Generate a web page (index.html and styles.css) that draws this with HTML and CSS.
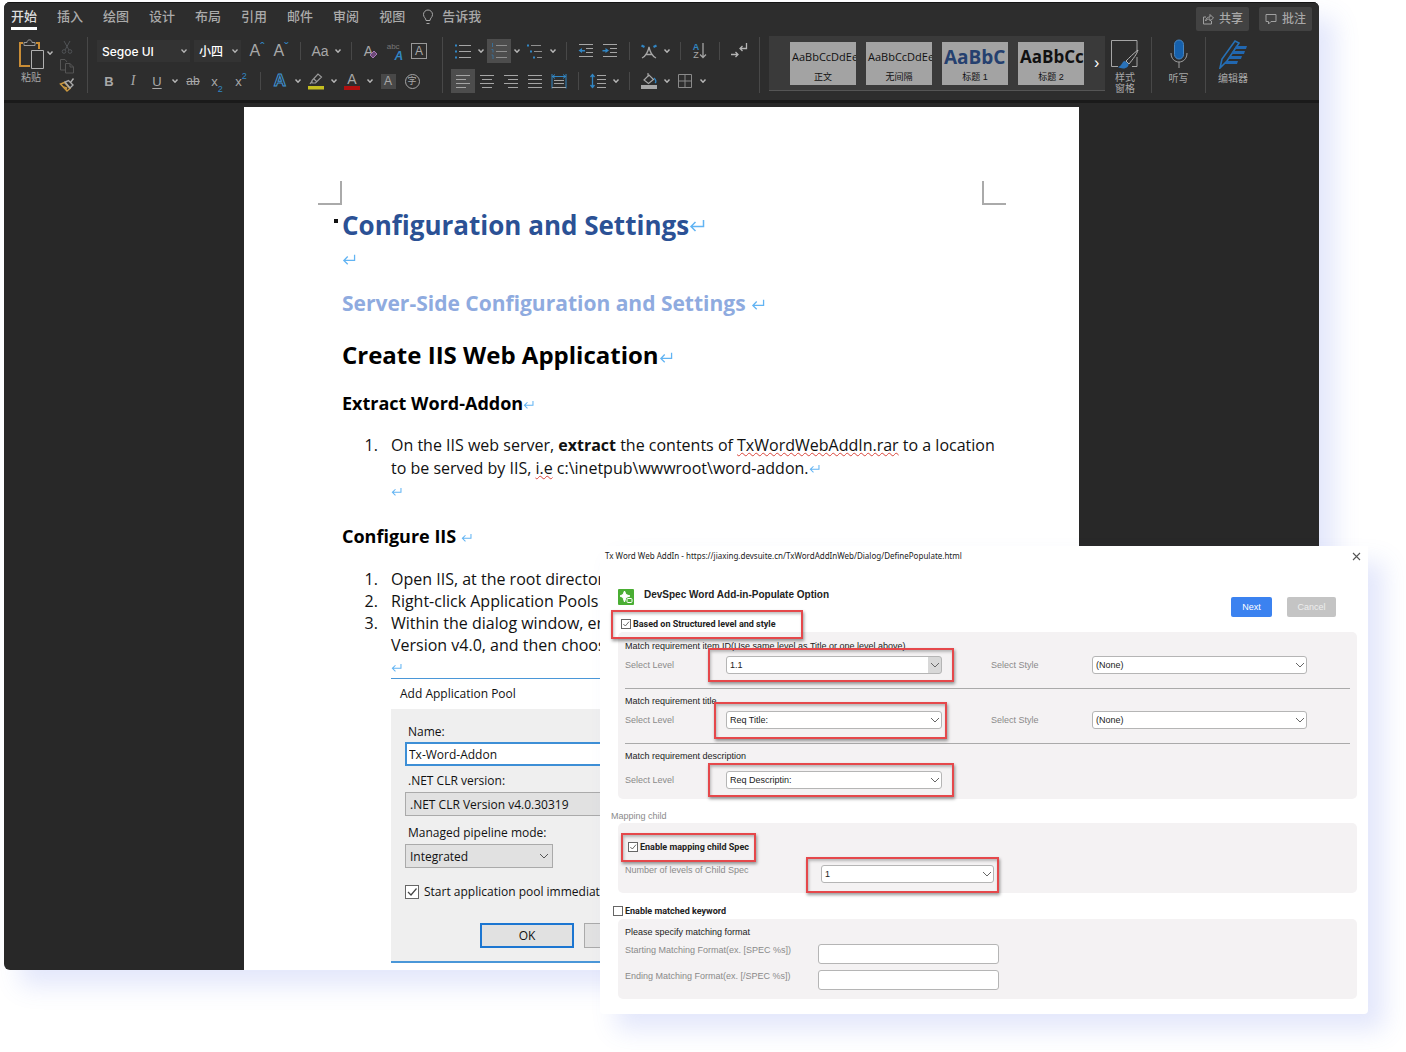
FILE: index.html
```html
<!DOCTYPE html>
<html lang="en">
<head>
    <meta charset="UTF-8">
    <meta name="viewport" content="width=device-width, initial-scale=1.0">
    <title>DevSpec Word Add-in</title>
    <link rel="stylesheet" href="styles.css">
</head>
<body>

    <!-- shared shapes -->
    <svg class="defs" width="0" height="0" aria-hidden="true">
        <symbol id="chev" viewBox="0 0 8 8"><path d="M1.5 2.5L4 5.2L6.5 2.5" fill="none" stroke="#b5b5b5" stroke-width="1.5"/></symbol>
        <symbol id="ret" viewBox="0 0 16 14"><path d="M14.5 1V7.5H2M6.5 3L2 7.5L6.5 12" fill="none" stroke="#62b4f3" stroke-width="1.5"/></symbol>
    </svg>

    <main class="word">
        <header class="ribbon">
            <div class="tabs-row">
                <nav class="tabs">
                    <a href="#" class="tab active">开始</a>
                    <a href="#" class="tab">插入</a>
                    <a href="#" class="tab">绘图</a>
                    <a href="#" class="tab">设计</a>
                    <a href="#" class="tab">布局</a>
                    <a href="#" class="tab">引用</a>
                    <a href="#" class="tab">邮件</a>
                    <a href="#" class="tab">审阅</a>
                    <a href="#" class="tab">视图</a>
                </nav>
                <button class="tell-me">
                    <svg width="12" height="16" viewBox="0 0 12 16" fill="none" stroke="#a8a8a8"><path d="M4 11.5C4 9 1.5 8.5 1.5 5.5a4.5 4.5 0 0 1 9 0C10.500 8.500 8 9 8 11.500zM4.500 14.500h3"/></svg>
                    告诉我
                </button>
                <div class="share">
                    <button class="share-btn">
                        <svg width="12" height="12" viewBox="0 0 12 12" fill="none" stroke="#a0a0a0"><path d="M4 4H1.500v7h8V8M3.500 8C4 5 6 4 8 4V1.500L11.500 5L8 8V6C6 6 4.500 6.500 3.500 8z"/></svg>
                        共享
                    </button>
                    <button class="share-btn">
                        <svg width="12" height="12" viewBox="0 0 12 12" fill="none" stroke="#a0a0a0"><path d="M1 1.500h10v7H6L3.500 11V8.500H1z"/></svg>
                        批注
                    </button>
                </div>
            </div>

            <div class="tools">
                <div class="group clipboard">
                    <button class="big paste">
                        <svg width="27" height="31" viewBox="0 0 27 31" fill="none"><path d="M5 4H2V27H12M18 4H21V10" stroke="#c98d36" stroke-width="2"/><path d="M6 6.500V3.500H9C9 0 14 0 14 3.500H17V6.500z" stroke="#999"/><path d="M13.500 11.500H25.500V29.500H13.500z" fill="#2d2d2d" stroke="#b0b0b0"/></svg>
                        <span>粘贴</span>
                    </button>
                    <svg class="chev" aria-hidden="true"><use href="#chev"/></svg>
                    <div class="clip-side">
                        <button aria-label="Cut"><svg width="16" height="16" viewBox="0 0 16 16" fill="none" stroke="#505356"><path d="M5 2L10 11M11 2L6 11"/><circle cx="5" cy="12.500" r="1.800"/><circle cx="11" cy="12.500" r="1.800"/></svg></button>
                        <button aria-label="Copy"><svg width="16" height="16" viewBox="0 0 16 16" fill="none" stroke="#555"><path d="M6 12H1.500V1.500H6L8 4M6.500 5.500H11L14.500 9V15H6.500zM11 5.500V9H14.500"/></svg></button>
                        <button aria-label="Format painter"><svg width="16" height="16" viewBox="0 0 16 16" fill="none"><path d="M1.500 7L8 14L11 11.500L5.500 5.500z" stroke="#c9973f" stroke-width="1.500"/><path d="M4 9L8.500 10.500L7.500 13z" fill="#c9973f"/><path d="M6 5L11 11L14 8L9.500 3.500zM11.500 5.500L14.500 1.500" stroke="#aaa" stroke-width="1.400"/></svg></button>
                    </div>
                </div>

                <div class="group font">
                    <div class="row">
                        <select class="font-name" aria-label="Font"><option>Segoe UI</option></select>
                        <select class="font-size" aria-label="Font size"><option>小四</option></select>
                        <button class="icon resize">A<sup>ˆ</sup></button>
                        <button class="icon resize">A<sup>ˇ</sup></button>
                        <i class="sep"></i>
                        <button class="icon">Aa</button>
                        <svg class="chev"><use href="#chev"/></svg>
                        <i class="sep"></i>
                        <button class="icon clear">A<svg width="9" height="9" viewBox="0 0 9 9"><path d="M1 5L5 1L8 4L4 8z" fill="#6d4a78" stroke="#a678b4"/></svg></button>
                        <button class="icon phonetic"><small>abc</small><b>A</b></button>
                        <button class="icon"><span class="boxed">A</span></button>
                    </div>
                    <div class="row">
                        <button class="icon strong">B</button>
                        <button class="icon italic">I</button>
                        <button class="icon under">U</button>
                        <svg class="chev"><use href="#chev"/></svg>
                        <button class="icon strike">ab</button>
                        <button class="icon script">x<sub>2</sub></button>
                        <button class="icon script">x<sup>2</sup></button>
                        <i class="sep"></i>
                        <button class="icon effect">A</button>
                        <svg class="chev"><use href="#chev"/></svg>
                        <button class="icon" aria-label="Highlight"><svg width="18" height="18" viewBox="0 0 18 18" fill="none"><path d="M5 11V8.500L11 2L14.500 5L8.500 11zM7 7L10 10M3 12L5 9" stroke="#999" stroke-width="1.200"/><path d="M1 14H17V17.500H1z" fill="#c5bf20"/></svg></button>
                        <svg class="chev"><use href="#chev"/></svg>
                        <button class="icon colour">A</button>
                        <svg class="chev"><use href="#chev"/></svg>
                        <button class="icon"><span class="shaded">A</span></button>
                        <button class="icon"><span class="circled">字</span></button>
                    </div>
                </div>

                <div class="group para">
                    <div class="row">
                        <button class="icon" aria-label="Bullets"><svg width="18" height="18" viewBox="0 0 18 18"><path d="M5 3.500H17M5 9.500H17M5 15.500H17" stroke="#a5a5a5"/><path d="M1 2.500h2v2H1zM1 8.500h2v2H1zM1 14.500h2v2H1z" fill="#3186c4"/></svg></button>
                        <svg class="chev"><use href="#chev"/></svg>
                        <button class="icon on" aria-label="Numbering"><svg width="18" height="18" viewBox="0 0 18 18"><path d="M6 3.500H17M6 9.500H17M6 15.500H17" stroke="#8e8e8e"/><path d="M2.500 1V5M1.500 7.500H3V10.500M1.500 13H3V17" stroke="#3a6e96" fill="none"/></svg></button>
                        <svg class="chev"><use href="#chev"/></svg>
                        <button class="icon" aria-label="Multilevel list"><svg width="18" height="18" viewBox="0 0 18 18"><path d="M5 3.500H15M8 9.500H16M11 15.500H16" stroke="#909090"/><path d="M1 2.500h2v2H1zM4 8.500h2v2H4zM7 14.500h2v2H7z" fill="#3186c4"/></svg></button>
                        <svg class="chev"><use href="#chev"/></svg>
                        <i class="sep"></i>
                        <button class="icon" aria-label="Decrease indent"><svg width="18" height="18" viewBox="0 0 18 18"><path d="M2 2.500H16M9 6.500H16M9 10.500H16M2 14.500H16" stroke="#a5a5a5"/><path d="M1.500 8.500L5 6V8H8V9.500H5V11z" fill="#3186c4"/></svg></button>
                        <button class="icon" aria-label="Increase indent"><svg width="18" height="18" viewBox="0 0 18 18"><path d="M2 2.500H16M9 6.500H16M9 10.500H16M2 14.500H16" stroke="#a5a5a5"/><path d="M8 8.500L4.500 6V8H1.500V9.500H4.500V11z" fill="#3186c4"/></svg></button>
                        <i class="sep"></i>
                        <button class="icon" aria-label="Asian layout"><svg width="18" height="18" viewBox="0 0 18 18" fill="none"><path d="M1.500 3.500L4.500 5M16.500 3.500L13.500 5" stroke="#3186c4" stroke-width="2.200"/><path d="M2 16C6 14 8 10 9 5C10 10 12 14 16 16M5.500 12.500H12.500" stroke="#a5a5a5" stroke-width="1.300"/></svg></button>
                        <svg class="chev"><use href="#chev"/></svg>
                        <i class="sep"></i>
                        <button class="icon sort" aria-label="Sort"><span><b>A</b>Z</span><svg width="8" height="18" viewBox="0 0 8 18"><path d="M4 1V15.500M1 12.500L4 15.500L7 12.500" fill="none" stroke="#a5a5a5" stroke-width="1.300"/></svg></button>
                        <i class="sep"></i>
                        <button class="icon" aria-label="Show marks"><svg width="18" height="18" viewBox="0 0 18 18" fill="none" stroke="#b5b5b5" stroke-width="1.300"><path d="M16.500 1V6.500H10M12.500 4L10 6.500L12.500 9M1 12.500H8M5.500 10L8 12.500L5.500 15"/></svg></button>
                    </div>
                    <div class="row">
                        <button class="icon on" aria-label="Align left"><svg width="16" height="16" viewBox="0 0 16 16" stroke="#a5a5a5"><path d="M1 2.500H15M1 6.500H11M1 10.500H15M1 14.500H11"/></svg></button>
                        <button class="icon" aria-label="Centre"><svg width="16" height="16" viewBox="0 0 16 16" stroke="#a5a5a5"><path d="M1 2.500H15M3 6.500H13M1 10.500H15M3 14.500H13"/></svg></button>
                        <button class="icon" aria-label="Align right"><svg width="16" height="16" viewBox="0 0 16 16" stroke="#a5a5a5"><path d="M1 2.500H15M5 6.500H15M1 10.500H15M5 14.500H15"/></svg></button>
                        <button class="icon" aria-label="Justify"><svg width="16" height="16" viewBox="0 0 16 16" stroke="#a5a5a5"><path d="M1 2.500H15M1 6.500H15M1 10.500H15M1 14.500H15"/></svg></button>
                        <button class="icon" aria-label="Distribute"><svg width="16" height="16" viewBox="0 0 16 16" fill="none"><path d="M1 1V15.500M15 1V15.500M1 3.500H15M4 1.500L1.500 3.500L4 5.500M12 1.500L14.500 3.500L12 5.500" stroke="#3186c4"/><path d="M3 7.500H13M3 10.500H13M1 14.500H15" stroke="#a5a5a5"/></svg></button>
                        <i class="sep"></i>
                        <button class="icon" aria-label="Line spacing"><svg width="18" height="18" viewBox="0 0 18 18" fill="none"><path d="M3.500 2V16M1.500 5L3.500 2.500L5.500 5M1.500 13L3.500 15.500L5.500 13" stroke="#3186c4" stroke-width="1.300"/><path d="M8 3.500H17M8 7.500H17M8 11.500H17M8 15.500H17" stroke="#a5a5a5"/></svg></button>
                        <svg class="chev"><use href="#chev"/></svg>
                        <i class="sep"></i>
                        <button class="icon" aria-label="Shading"><svg width="18" height="18" viewBox="0 0 18 18" fill="none"><path d="M4 8L9 3L13.500 7.500L8.500 11.500zM8 1V5" stroke="#a5a5a5" stroke-width="1.200"/><path d="M14 6C16 8 16.500 10 15 11" stroke="#3186c4" stroke-width="1.400"/><path d="M1 13H17V17H1z" fill="#a8a8a8"/></svg></button>
                        <svg class="chev"><use href="#chev"/></svg>
                        <button class="icon" aria-label="Borders"><svg width="16" height="16" viewBox="0 0 16 16" fill="none" stroke="#8a8a8a"><path d="M1.500 1.500H14.500V14.500H1.500zM8 1.500V14.500M1.500 8H14.500"/></svg></button>
                        <svg class="chev"><use href="#chev"/></svg>
                    </div>
                </div>

                <div class="gallery">
                    <button class="style-card"><span class="sample">AaBbCcDdEe</span><span class="style-name">正文</span></button>
                    <button class="style-card"><span class="sample">AaBbCcDdEe</span><span class="style-name">无间隔</span></button>
                    <button class="style-card"><span class="sample large blue">AaBbC</span><span class="style-name">标题 1</span></button>
                    <button class="style-card"><span class="sample medium">AaBbCc</span><span class="style-name">标题 2</span></button>
                    <button class="more" aria-label="More styles">›</button>
                </div>

                <div class="group end">
                    <button class="big pane">
                        <svg width="30" height="30" viewBox="0 0 30 30" fill="none"><path d="M27 12V1.500H1.500V27.500H8M22 27.500H27V18" stroke="#a5a5a5"/><path d="M28 11C24 14 19 19 16 22L19 25C23 20 27 15 28 11z" stroke="#b5b5b5"/><path d="M15 22C12 22 12 27 8 28C13 31 19 29 18.500 25z" fill="#2a72b8"/></svg>
                        <span>样式<br>窗格</span>
                    </button>
                </div>
                <div class="group end">
                    <button class="big">
                        <svg width="20" height="30" viewBox="0 0 20 30" fill="none"><rect x="5.500" y="1" width="9" height="19" rx="4.500" fill="#1661ad" stroke="#4a86bf"/><path d="M2 14C2 26 18 26 18 14M10 23V29" stroke="#a0a0a0"/></svg>
                        <span>听写</span>
                    </button>
                </div>
                <div class="group end">
                    <button class="big">
                        <svg width="30" height="30" viewBox="0 0 30 30" fill="none"><path d="M2 29L4 20L17 2L21 4L9 22z" stroke="#2670b5" stroke-width="1.600"/><path d="M18 7H29L28 10H16zM15 12H27L26 15H13zM12 17H24L23 20H10zM9 22H20L19 25H6z" fill="#2167b0"/></svg>
                        <span>编辑器</span>
                    </button>
                </div>
            </div>
        </header>

        <article class="page">
            <div class="crop-marks"><i class="crop left"></i><i class="crop right"></i></div>
            <h1>Configuration and Settings<svg class="ret big-ret"><use href="#ret"/></svg></h1>
            <p class="blank"><svg class="ret"><use href="#ret"/></svg></p>
            <h2>Server-Side Configuration and Settings <svg class="ret"><use href="#ret"/></svg></h2>
            <h3>Create IIS Web Application<svg class="ret"><use href="#ret"/></svg></h3>
            <h4>Extract Word-Addon<svg class="ret small-ret"><use href="#ret"/></svg></h4>
            <ol>
                <li>On the IIS web server, <b>extract</b> the contents of <span class="typo">TxWordWebAddIn.rar</span> to a location<br>
                    to be served by IIS, <span class="typo">i.e</span> c:\inetpub\wwwroot\word-addon.<svg class="ret small-ret"><use href="#ret"/></svg><br>
                    <svg class="ret small-ret"><use href="#ret"/></svg></li>
            </ol>
            <h4>Configure IIS <svg class="ret small-ret"><use href="#ret"/></svg></h4>
            <ol class="tight">
                <li>Open IIS, at the root directory</li>
                <li>Right-click Application Pools</li>
                <li>Within the dialog window, enter<br>
                    Version v4.0, and then choose<br>
                    <svg class="ret small-ret"><use href="#ret"/></svg></li>
            </ol>

            <form class="pool">
                <div class="pool-title">Add Application Pool</div>
                <div class="pool-body">
                    <label for="pool-name">Name:</label>
                    <input type="text" id="pool-name" value="Tx-Word-Addon">
                    <label for="clr">.NET CLR version:</label>
                    <select id="clr"><option>.NET CLR Version v4.0.30319</option></select>
                    <label for="pipeline">Managed pipeline mode:</label>
                    <select id="pipeline" class="short"><option>Integrated</option></select>
                    <label class="pool-check"><input type="checkbox" checked>Start application pool immediately</label>
                    <div class="pool-actions">
                        <button type="button" class="ok">OK</button>
                        <button type="button" aria-label="Cancel"></button>
                    </div>
                </div>
            </form>
        </article>
    </main>

    <section class="addin">
        <div class="addin-bar">
            <span>Tx Word Web AddIn - https://jiaxing.devsuite.cn/TxWordAddInWeb/Dialog/DefinePopulate.html</span>
            <button class="close" aria-label="Close"><svg width="9" height="9" viewBox="0 0 9 9"><path d="M1 1L8 8M8 1L1 8" stroke="#555" stroke-width="1.100"/></svg></button>
        </div>

        <div class="addin-head">
            <svg width="16" height="16" viewBox="0 0 16 16"><rect width="16" height="16" rx="1" fill="#4aae33"/><path d="M6.500 2L8 5.500L12 7L8 8.500L6.500 13L5 8.500L2 7L5 5.500z" fill="#fff" stroke="#fff"/><rect x="9" y="9.500" width="5" height="4" rx="1" fill="#4aae33" stroke="#fff"/></svg>
            <h5>DevSpec Word Add-in-Populate Option</h5>
            <div class="addin-actions">
                <button class="next">Next</button>
                <button class="cancel">Cancel</button>
            </div>
        </div>

        <label class="check marked first-check"><input type="checkbox" checked>Based on Structured level and style</label>
        <div class="panel">
            <div class="match">
                <p>Match requirement item ID(Use same level as Title or one level above)</p>
                <div class="fields">
                    <label for="level-id">Select Level</label>
                    <div class="pick marked wide"><select id="level-id" class="hover"><option>1.1</option></select></div>
                    <label for="style-id">Select Style</label>
                    <select id="style-id"><option>(None)</option></select>
                </div>
            </div>
            <div class="match">
                <p>Match requirement title</p>
                <div class="fields">
                    <label for="level-title">Select Level</label>
                    <div class="pick marked"><select id="level-title"><option>Req Title:</option></select></div>
                    <label for="style-title">Select Style</label>
                    <select id="style-title"><option>(None)</option></select>
                </div>
            </div>
            <div class="match">
                <p>Match requirement description</p>
                <div class="fields last">
                    <label for="level-desc">Select Level</label>
                    <div class="pick marked wide"><select id="level-desc"><option>Req Descriptin:</option></select></div>
                </div>
            </div>
        </div>

        <p class="caption">Mapping child</p>
        <div class="panel child">
            <label class="check marked"><input type="checkbox" checked>Enable mapping child Spec</label>
            <div class="child-row">
                <label for="levels">Number of levels of Child Spec</label>
                <div class="pick marked wide"><select id="levels"><option>1</option></select></div>
            </div>
        </div>

        <label class="check keyword"><input type="checkbox">Enable matched keyword</label>
        <div class="panel format">
            <p>Please specify matching format</p>
            <div class="format-row">
                <label for="start">Starting Matching Format(ex. [SPEC %s])</label>
                <input type="text" id="start">
            </div>
            <div class="format-row">
                <label for="end">Ending Matching Format(ex. [/SPEC %s])</label>
                <input type="text" id="end">
            </div>
        </div>
    </section>

</body>
</html>
```
FILE: styles.css
```css
* {
    box-sizing: border-box;
}
body {
    position: relative;
    margin: 0;
    padding: 2px 87px 80px 4px;
    background-color: #fff;
    font-family: "Open Sans", "Noto Sans", sans-serif;
}
h1, h2, h3, h4, h5, p, ol {
    margin: 0;
    padding: 0;
}
button {
    padding: 0;
    border: none;
    background: none;
    color: inherit;
    font: inherit;
    cursor: pointer;
}
.defs {
    display: block;
    position: absolute;
}

/* Word window */
.word {
    border-radius: 6px;
    background-color: #282828;
    box-shadow: 16px 16px 24px rgba(90, 115, 230, 0.17);
    overflow: hidden;
}
.ribbon {
    height: 101px;
    border-top: 1px solid #151515;
    border-bottom: 3px solid #1a1a1a;
    background-color: #2d2d2d;
    color: #a8a8a8;
    font-family: "Liberation Sans", "Noto Sans CJK SC", sans-serif;
}
.tabs-row {
    display: flex;
    height: 34px;
    padding: 4px 7px 0;
    font-size: 13px;
    line-height: 20px;
}
.tabs {
    display: flex;
    gap: 20px;
}
.tab {
    height: 23px;
    color: #aaa;
    font-weight: 500;
    text-decoration: none;
}
.tab.active {
    border-bottom: 3px solid #fff;
    color: #ddd;
}
.tell-me {
    display: flex;
    align-items: center;
    gap: 8px;
    height: 20px;
    margin-left: 17px;
    font-weight: 500;
}
.share {
    display: flex;
    gap: 10px;
    margin-left: auto;
}
.share-btn {
    display: flex;
    align-items: center;
    justify-content: center;
    gap: 5px;
    width: 53px;
    height: 24px;
    border-radius: 2px;
    background-color: #424242;
    font-size: 12px;
    font-weight: 500;
}
.tools {
    display: flex;
    height: 56px;
}
.group {
    border-right: 1px solid #484848;
}
.clipboard {
    display: flex;
    width: 84px;
    padding: 2px 0 0 12px;
}
.big {
    display: flex;
    flex-direction: column;
    align-items: center;
    gap: 2px;
    font-size: 10px;
    line-height: 12px;
}
.chev {
    flex: none;
    width: 12px;
    height: 8px;
}
.clipboard .chev {
    margin: 10px 1px 0 -4px;
}
.paste {
    width: 32px;
    padding-right: 2px;
}
.clip-side {
    display: flex;
    flex-direction: column;
    gap: 3px;
    margin-left: 2px;
}
.clip-side button {
    height: 16px;
}
.clip-side svg {
    display: block;
}
.font {
    width: 355px;
    padding: 2px 0 0 9px;
}
.para {
    width: 317px;
    padding: 2px 0 0 8px;
}
.row {
    display: flex;
    align-items: center;
    height: 24px;
    margin-bottom: 6px;
}
.icon {
    display: flex;
    flex: none;
    align-items: center;
    justify-content: center;
    width: 24px;
    height: 24px;
    font-size: 14px;
}
.icon.on {
    background-color: #4d4d4d;
}
.icon sup, .icon sub {
    color: #3186c4;
    font-size: 9px;
    line-height: 8px;
}
.sep {
    flex: none;
    width: 1px;
    height: 18px;
    margin: 0 7px;
    background-color: #484848;
}
.font-name, .font-size {
    appearance: none;
    height: 22px;
    margin-right: 4px;
    padding: 0 5px;
    border: none;
    border-radius: 0;
    background: #333 url("data:image/svg+xml,%3Csvg xmlns='http://www.w3.org/2000/svg' width='8' height='8'%3E%3Cpath d='M1.500 2.500L4 5.200L6.500 2.500' fill='none' stroke='%23b5b5b5' stroke-width='1.300'/%3E%3C/svg%3E") no-repeat right 2px center;
    color: #fff;
    font: 500 12px Inter, "Noto Sans CJK SC", sans-serif;
}
.font-name {
    width: 93px;
}
.font-size {
    width: 47px;
}
.resize {
    font-size: 16px;
}
.icon.resize sup {
    align-self: flex-start;
    padding-top: 5px;
    font-size: 13px;
}
.clear svg {
    align-self: flex-end;
    margin: 0 0 4px -4px;
}
.phonetic {
    color: #777;
}
.phonetic small {
    align-self: flex-start;
    font-size: 8px;
    line-height: 16px;
}
.phonetic b {
    align-self: flex-end;
    margin-left: -5px;
    color: #3186c4;
    font-size: 12px;
    font-style: italic;
}
.boxed {
    width: 16px;
    border: 1px solid #999;
    font-size: 12px;
    line-height: 14px;
}
.strong {
    font-size: 13px;
    font-weight: bold;
}
.italic {
    font-family: "Liberation Serif", serif;
    font-style: italic;
}
.under {
    font-size: 13px;
    text-decoration: underline;
    text-underline-offset: 2px;
}
.strike {
    font-size: 12px;
    text-decoration: line-through;
}
.script {
    font-size: 13px;
}
.script sub {
    align-self: flex-end;
}
.script sup {
    align-self: flex-start;
    padding-top: 3px;
}
.effect {
    color: #2d2d2d;
    font-size: 17px;
    font-weight: bold;
    -webkit-text-stroke: 1px #3f93d2;
}
.colour {
    width: 16px;
    height: 17px;
    margin: 0 4px;
    border-bottom: 4px solid #b01010;
}
.shaded {
    width: 15px;
    background-color: #484848;
    font-size: 12px;
    line-height: 15px;
}
.circled {
    width: 15px;
    border: 1px solid #a5a5a5;
    border-radius: 50%;
    font-size: 9px;
    line-height: 13px;
}
.sort span {
    display: grid;
    font-size: 9px;
    line-height: 8px;
}
.sort b {
    color: #3186c4;
}
.gallery {
    display: flex;
    align-items: center;
    gap: 10px;
    margin: -1px 5px 0 9px;
    padding-left: 21px;
    width: 336px;
    height: 55px;
    border-bottom: 1px solid #555;
    background-color: #3a3a3a;
}
.style-card {
    flex: none;
    width: 66px;
    height: 43px;
    padding: 0 2px;
    background-color: #a3a3a3;
    color: #111;
    overflow: hidden;
}
.sample {
    display: block;
    height: 28px;
    font: 11px/30px "Open Sans", sans-serif;
    text-align: left;
    white-space: nowrap;
}
.sample.large {
    font-size: 19px;
    font-weight: bold;
}
.sample.medium {
    font-size: 17px;
    font-weight: bold;
}
.sample.blue {
    color: #25406f;
}
.style-name {
    display: block;
    font-size: 9px;
    line-height: 14px;
}
.more {
    color: #fff;
    font-size: 16px;
}
.end {
    width: 54px;
    padding-top: 2px;
}
.end .big {
    width: 100%;
    gap: 4px;
}
.end .big span {
    line-height: 11px;
}
.end:nth-last-child(3) {
    width: 42px;
}
.end .big.pane {
    width: 30px;
    gap: 3px;
}
.end:last-child {
    border: none;
}

/* document */
.page {
    width: 835px;
    margin: 4px auto 0;
    padding: 74px 73px 7px 98px;
    background-color: #fff;
    color: #111;
    white-space: nowrap;
}
.crop-marks {
    display: flex;
    justify-content: space-between;
    margin-left: -24px;
}
.crop {
    width: 24px;
    height: 24px;
    border-bottom: 2px solid #aaa;
}
.crop.left {
    border-right: 2px solid #aaa;
}
.crop.right {
    border-left: 2px solid #aaa;
}
h1 {
    position: relative;
    color: #2b5195;
    font-size: 26px;
    line-height: 40px;
}
h1::before {
    position: absolute;
    left: -8px;
    top: 14px;
    width: 4px;
    height: 4px;
    background-color: #111;
    content: "";
}
.ret {
    width: 14px;
    height: 12px;
}
.big-ret {
    width: 16px;
    height: 14px;
    margin-bottom: 2px;
}
.small-ret {
    width: 11px;
    height: 10px;
}
.blank {
    height: 30px;
    line-height: 30px;
}
h2 {
    margin-top: 10px;
    color: #8fabdf;
    font-size: 21px;
    line-height: 36px;
}
h3 {
    margin-top: 16px;
    color: #000;
    font-size: 24px;
    line-height: 36px;
}
h4 {
    margin-top: 16px;
    color: #000;
    font-size: 18px;
    line-height: 28px;
}
ol {
    margin: 17px 0 19px;
    padding-left: 40px;
    font-size: 16px;
    line-height: 23px;
}
li {
    padding-left: 9px;
}
ol.tight {
    margin: 18px 0 0;
    line-height: 22px;
}
.typo {
    text-decoration: underline wavy #d9443a 1px;
    text-underline-offset: 1px;
}

/* application pool form */
.pool {
    width: 400px;
    margin-left: 49px;
    border: solid #4a97d8;
    border-width: 1px 0 2px;
    font-size: 12px;
}
.pool-title {
    padding-left: 9px;
    line-height: 30px;
}
.pool-body {
    display: flex;
    flex-direction: column;
    padding: 13px 14px 13px;
    background-color: #efefef;
}
.pool-body > label {
    padding-left: 3px;
    line-height: 20px;
}
.pool input[type="text"], .pool select {
    appearance: none;
    height: 24px;
    margin-bottom: 5px;
    padding: 0 4px;
    border: 1px solid #aaa;
    border-radius: 0;
    background-color: #e1e1e1;
    color: #111;
    font: inherit;
}
.pool input[type="text"] {
    border: 2px solid #3d8fd6;
    background-color: #fff;
    padding: 0 2px;
}
.pool select {
    margin: 1px 0 7px;
}
.pool select.short {
    width: 148px;
    background: #e1e1e1 url("data:image/svg+xml,%3Csvg xmlns='http://www.w3.org/2000/svg' width='10' height='8'%3E%3Cpath d='M1 2L5 6L9 2' fill='none' stroke='%23555'/%3E%3C/svg%3E") no-repeat right 3px center;
}
.pool-body > .pool-check {
    display: flex;
    align-items: center;
    gap: 5px;
    margin-top: 7px;
    padding: 0;
}
input[type="checkbox"] {
    flex: none;
    appearance: none;
    width: 10px;
    height: 10px;
    margin: 0;
    border: 1px solid #666;
    background: #fff no-repeat center;
}
input[type="checkbox"]:checked {
    background-image: url("data:image/svg+xml,%3Csvg xmlns='http://www.w3.org/2000/svg' viewBox='0 0 12 12'%3E%3Cpath d='M2 6L5 9L10.500 2.500' fill='none' stroke='%23444' stroke-width='1.200'/%3E%3C/svg%3E");
}
.pool-check input[type="checkbox"] {
    width: 14px;
    height: 14px;
}
.pool-actions {
    display: flex;
    gap: 10px;
    margin: 21px 0 0 75px;
}
.pool-actions button {
    width: 94px;
    height: 25px;
    border: 1px solid #aaa;
    background-color: #e1e1e1;
}
.pool-actions .ok {
    border: 2px solid #1c76d1;
}

/* add-in window, floats over the document */
.addin {
    position: absolute;
    left: 600px;
    right: 38px;
    top: 546px;
    padding: 0 11px 15px;
    border-radius: 0 0 4px 4px;
    background-color: #fff;
    box-shadow: 16px 16px 24px rgba(90, 115, 230, 0.17);
    color: #222;
    font: 9px/12px "Liberation Sans", sans-serif;
}
.addin-bar {
    display: flex;
    justify-content: space-between;
    align-items: center;
    height: 20px;
    margin: 0 -4px 0 -6px;
    font: 8px/12px "Noto Sans", sans-serif;
}
.close svg {
    display: block;
}
.addin-head {
    display: flex;
    gap: 10px;
    height: 51px;
    padding: 23px 21px 0 7px;
}
.addin-head h5 {
    font-size: 10px;
    line-height: 12px;
}
.addin-actions {
    display: flex;
    gap: 15px;
    margin: 8px 0 0 auto;
}
.addin-actions button {
    width: 49px;
    height: 20px;
    border-radius: 2px;
    background-color: #c4c4c4;
    color: #eee;
}
.addin-actions .next {
    width: 41px;
    background-color: #3b82f0;
    color: #fff;
}
.check {
    display: flex;
    align-items: center;
    gap: 2px;
    width: max-content;
    height: 14px;
    font-family: Roboto, sans-serif;
    font-size: 9px;
    font-weight: bold;
}
.first-check {
    margin: 0 0 1px 10px;
}
.panel {
    margin-left: 7px;
    padding: 8px 7px 0;
    border-radius: 5px;
    background-color: #f4f2f3;
}
.panel p {
    line-height: 12px;
}
.match {
    height: 55px;
    border-bottom: 1px solid #aaa;
}
.match:first-child {
    height: 49px;
}
.match:last-child {
    border: none;
}
.match + .match p {
    padding-top: 6px;
}
.fields {
    display: grid;
    grid-template-columns: 101px 216px 49px 101px 215px;
    align-items: center;
    height: 18px;
    margin-top: 4px;
}
.fields.last {
    margin-top: 9px;
}
.fields label:nth-of-type(2) {
    grid-column: 4;
}
.fields label, .child-row label, .format-row label, .caption {
    color: #8a8a8a;
}
.addin select, .addin input[type="text"] {
    appearance: none;
    display: block;
    width: 100%;
    height: 18px;
    padding: 0 3px;
    border: 1px solid #b5b5b5;
    border-radius: 3px;
    background-color: #fff;
    color: #222;
    font: inherit;
}
.addin select {
    background: #fff url("data:image/svg+xml,%3Csvg xmlns='http://www.w3.org/2000/svg' width='10' height='8'%3E%3Cpath d='M1 2L5 6L9 2' fill='none' stroke='%23666'/%3E%3C/svg%3E") no-repeat right 1px center;
}
.addin select.hover {
    background-image: url("data:image/svg+xml,%3Csvg xmlns='http://www.w3.org/2000/svg' width='14' height='18'%3E%3Cpath d='M0 0H14V18H0z' fill='%23d8d8d8'/%3E%3Cpath d='M3 7L7 11L11 7' fill='none' stroke='%23666'/%3E%3C/svg%3E");
    background-position: right -1px center;
}

/* red frames that point out the options */
.marked {
    position: relative;
}
.marked::after {
    position: absolute;
    inset: -9px -5px -10px -12px;
    border: 2px solid #e5484b;
    box-shadow: 1px 2px 3px rgba(0, 0, 0, 0.4), inset 1px 2px 3px rgba(0, 0, 0, 0.25);
    content: "";
    pointer-events: none;
}
.marked.wide::after {
    inset: -8px -12px -8px -18px;
}
.check.marked::after {
    inset: -7px -7px -8px -7px;
}
.check.first-check::after {
    inset: -7px -27px -8px -10px;
}
.caption {
    padding: 11px 0 1px;
}
.child {
    height: 70px;
    padding: 17px 10px 0;
}
.child-row {
    display: flex;
    gap: 20px;
    margin: 10px 0 0 -3px;
}
.child-row label {
    width: 176px;
}
.child-row .pick {
    width: 173px;
    margin-top: 1px;
}
.child-row .marked.wide::after {
    inset: -8px -5px -10px -15px;
}
.keyword {
    margin: 11px 0 1px 2px;
}
.format {
    height: 80px;
    padding-top: 7px;
}
.format-row {
    display: flex;
    gap: 8px;
    height: 26px;
}
.format-row label {
    width: 185px;
}
.addin .format-row input {
    width: 181px;
    height: 20px;
}
.format p {
    margin-bottom: 6px;
}
```
